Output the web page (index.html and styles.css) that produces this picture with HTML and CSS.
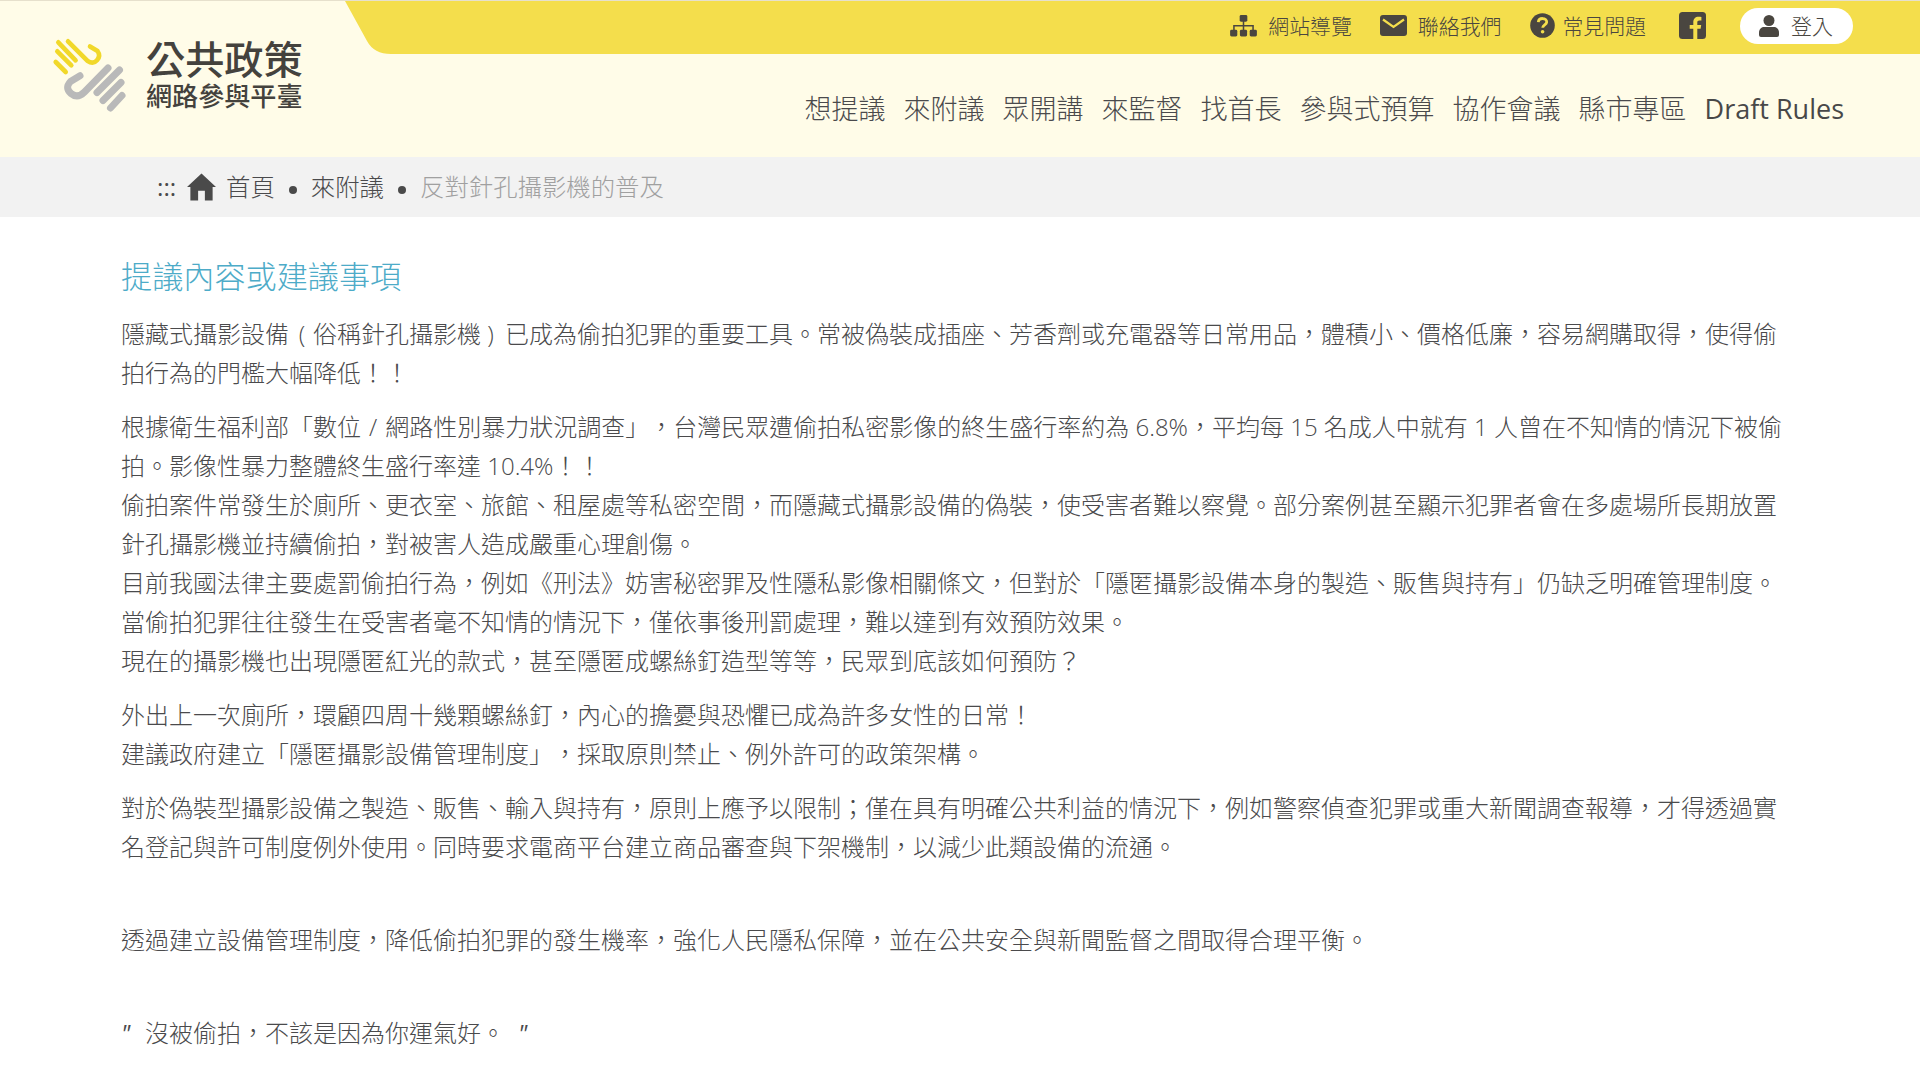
FILE: index.html
```html
<!DOCTYPE html>
<html lang="zh-Hant">
<head>
<meta charset="utf-8">
<title>公共政策網路參與平臺</title>
<link rel="stylesheet" href="styles.css">
</head>
<body>
<header class="header">
  <a class="logo">
    <svg class="logo-mark" viewBox="0 0 84 84" fill="none" stroke-linecap="round" stroke-linejoin="round">
      <g stroke="#f1d82a" stroke-width="4.6">
        <path d="M7.700 30l10 10"/>
        <path d="M9.300 19.300l14 14"/>
        <path d="M10.300 10.300l17.300 18"/>
        <path d="M20 9.300l19.500 19.500q5.500 4 9.500-.5t.5-9.300l-7.500-4.500"/>
      </g>
      <g stroke="#b9b9b9" stroke-width="7">
        <path d="M60 36L36.500 60q-7 7-13.500 1.500t-.5-12L32 43.800"/>
        <path d="M71.500 38L49 60.500"/>
        <path d="M73 50.500L55 68.500"/>
        <path d="M74 63.500L62.500 76"/>
      </g>
    </svg>
    <span class="logo-text">
      <span class="logo-title">公共政策</span>
      <span class="logo-sub">網路參與平臺</span>
    </span>
  </a>
  <div class="header-main">
    <div class="topbar">
      <a class="top-link top-sitemap">
        <svg width="27" height="22" viewBox="0 0 28 23" fill="#4a4640"><rect x="10" y="0" width="8" height="7" rx="1.500"/><rect x="0" y="15.500" width="7.500" height="7" rx="1.500"/><rect x="10.250" y="15.500" width="7.500" height="7" rx="1.500"/><rect x="20.500" y="15.500" width="7.500" height="7" rx="1.500"/><path d="M14 6v10M4 16v-4.800h20V16" fill="none" stroke="#4a4640" stroke-width="1.600"/></svg>
        <span>網站導覽</span>
      </a>
      <a class="top-link top-mail">
        <svg width="27" height="21" viewBox="0 0 27 21"><rect width="27" height="21" rx="3" fill="#4a4640"/><path d="M3 4.500L13.500 12 24 4.500" fill="none" stroke="#f4de4c" stroke-width="2.200"/></svg>
        <span>聯絡我們</span>
      </a>
      <a class="top-link top-faq">
        <svg width="25" height="25" viewBox="0 0 25 25"><circle cx="12.500" cy="12.500" r="12.300" fill="#4a4640"/><path d="M8.300 9.200c.4-5 8.700-4.800 8.400 0-.2 2.700-4 2.900-4 5.600" fill="none" stroke="#f4de4c" stroke-width="2.800"/><circle cx="12.600" cy="18.700" r="1.800" fill="#f4de4c"/></svg>
        <span>常見問題</span>
      </a>
      <a class="top-link top-fb">
        <svg width="27" height="27" viewBox="0 0 27 27"><rect width="27" height="27" rx="3.500" fill="#4a4640"/><path d="M14.300 27V16.800h-3.600v-3.900h3.600v-2.600c0-3.700 2.100-5.600 5.300-5.600 1 0 2 .1 2.800.3v3.600h-2c-1.600 0-2.100.9-2.100 2v2.300h3.900l-.6 3.900h-3.300V27z" fill="#f4de4c"/></svg>
      </a>
      <a class="login">
        <svg width="20" height="22" viewBox="0 0 20 22" fill="#4a4640"><circle cx="10" cy="5.500" r="5.500"/><path d="M5 12h10c3 0 5 2.500 5 5.500V20q0 2-2 2H2q-2 0-2-2v-2.500C0 14.500 2 12 5 12z"/></svg>
        <span>登入</span>
      </a>
    </div>
    <nav class="nav">
      <a>想提議</a><a>來附議</a><a>眾開講</a><a>來監督</a><a>找首長</a><a>參與式預算</a><a>協作會議</a><a>縣市專區</a><a class="nav-en">Draft Rules</a>
    </nav>
  </div>
</header>
<div class="breadcrumb">
  <span class="access">:::</span>
  <svg class="home" width="29" height="28" viewBox="0 0 30 28" fill="#4a4a4a"><path d="M15 0l15 14h-3.500v14h-8v-10h-7v10h-8V14H0z"/></svg>
  <a>首頁</a>
  <i class="dot"></i>
  <a>來附議</a>
  <i class="dot"></i>
  <span class="current">反對針孔攝影機的普及</span>
</div>
<main class="content">
  <h2>提議內容或建議事項</h2>
  <p>隱藏式攝影設備<span class="paren">(</span>俗稱針孔攝影機<span class="paren paren-close">)</span>已成為偷拍犯罪的重要工具。常被偽裝成插座、芳香劑或充電器等日常用品，體積小、價格低廉，容易網購取得，使得偷<br>拍行為的門檻大幅降低！！</p>
  <p>根據衛生福利部「數位<span class="slash"> / </span>網路性別暴力狀況調查」，台灣民眾遭偷拍私密影像的終生盛行率約為<span class="num"> 6.8%</span>，平均每<span class="num"> 15 </span>名成人中就有<span class="num"> 1 </span>人曾在不知情的情況下被偷<br>拍。影像性暴力整體終生盛行率達<span class="num"> 10.4%</span>！！<br>偷拍案件常發生於廁所、更衣室、旅館、租屋處等私密空間，而隱藏式攝影設備的偽裝，使受害者難以察覺。部分案例甚至顯示犯罪者會在多處場所長期放置<br>針孔攝影機並持續偷拍，對被害人造成嚴重心理創傷。<br>目前我國法律主要處罰偷拍行為，例如《刑法》妨害秘密罪及性隱私影像相關條文，但對於「隱匿攝影設備本身的製造、販售與持有」仍缺乏明確管理制度。<br>當偷拍犯罪往往發生在受害者毫不知情的情況下，僅依事後刑罰處理，難以達到有效預防效果。<br>現在的攝影機也出現隱匿紅光的款式，甚至隱匿成螺絲釘造型等等，民眾到底該如何預防？</p>
  <p>外出上一次廁所，環顧四周十幾顆螺絲釘，內心的擔憂與恐懼已成為許多女性的日常！<br>建議政府建立「隱匿攝影設備管理制度」，採取原則禁止、例外許可的政策架構。</p>
  <p>對於偽裝型攝影設備之製造、販售、輸入與持有，原則上應予以限制；僅在具有明確公共利益的情況下，例如警察偵查犯罪或重大新聞調查報導，才得透過實<br>名登記與許可制度例外使用。同時要求電商平台建立商品審查與下架機制，以減少此類設備的流通。<br><br></p>
  <p>透過建立設備管理制度，降低偷拍犯罪的發生機率，強化人民隱私保障，並在公共安全與新聞監督之間取得合理平衡。<br><br></p>
  <p><span class="quote">"</span>沒被偷拍，不該是因為你運氣好。<span class="quote quote-end">"</span></p>
</main>
</body>
</html>
```
FILE: styles.css
```css
* { box-sizing: border-box; }
body {
  margin: 0;
  height: 1080px;
  overflow: hidden;
  background: #fff;
  color: #4a4a4c;
  font-family: "Open Sans", "Noto Sans CJK TC", sans-serif;
  font-weight: 300;
  font-size: 24px;
  text-spacing-trim: space-all;
}
.header {
  height: 157px;
  display: flex;
  background: #fffce8;
  border-top: 1px solid #e6e0cc;
}
.logo {
  width: 345px;
  padding: 31px 0 0 48px;
  display: flex;
  gap: 14px;
  align-items: flex-start;
}
.logo-mark { width: 84px; height: 84px; flex: none; }
.logo-text {
  display: flex;
  flex-direction: column;
  padding-top: 6px;
  color: #44423d;
  font-weight: 500;
  white-space: nowrap;
}
.logo-title { font-size: 39.2px; line-height: 41px; }
.logo-sub { font-size: 26.1px; line-height: 35px; }
.header-main { flex: 1; display: flex; flex-direction: column; }
.topbar {
  height: 53px;
  padding: 0 67px 4px 0;
  display: flex;
  justify-content: flex-end;
  align-items: center;
  background: #f4de4c;
  clip-path: path("M0 0H1575V53H46Q29 53 22 40Z");
  color: #4a4640;
  font-size: 20.9px;
}
.top-link, .login { display: flex; align-items: center; line-height: 30px; }
.top-link svg, .login svg { flex: none; }
.top-sitemap, .top-mail { gap: 11px; margin-right: 28px; }
.top-mail { margin-right: 29px; }
.top-faq { gap: 7px; margin-right: 33px; }
.top-fb { margin-right: 34px; }
.login {
  width: 113px;
  height: 36px;
  padding-left: 19px;
  gap: 12px;
  background: #fff;
  border-radius: 18px;
}
.nav {
  display: flex;
  justify-content: flex-end;
  gap: 18px;
  padding: 35px 76px 0 0;
  font-size: 27px;
  line-height: 40px;
  white-space: nowrap;
}
.nav-en { font-weight: 400; font-size: 27px; color: #484848; }
.breadcrumb {
  height: 60px;
  padding-left: 157px;
  display: flex;
  align-items: center;
  background: #f2f2f2;
  font-size: 24.400px;
  line-height: 36px;
}
.access { width: 30px; font-weight: 400; }
.home { margin-right: 10px; }
.dot { width: 8px; height: 8px; margin: 6px 14px 0; border-radius: 50%; background: #4a4a4a; }
.current { color: #a0a0a0; }
.content { padding: 38px 0 0 121px; }
h2 {
  margin: 0 0 17px;
  color: #4dabc8;
  font-weight: 300;
  font-size: 31.150px;
  line-height: 42px;
}
p { margin: 0 0 14.800px; line-height: 39.050px; white-space: nowrap; }
.paren { display: inline-block; width: 24px; padding-left: 2px; text-align: center; }
.paren-close { padding: 0 5px 0 0; }
.slash { word-spacing: 1.800px; }
.num { font-weight: 350; }
.quote { display: inline-block; width: 24px; font-style: italic; font-weight: 400; }
.quote-end { padding-left: 13px; }
```
